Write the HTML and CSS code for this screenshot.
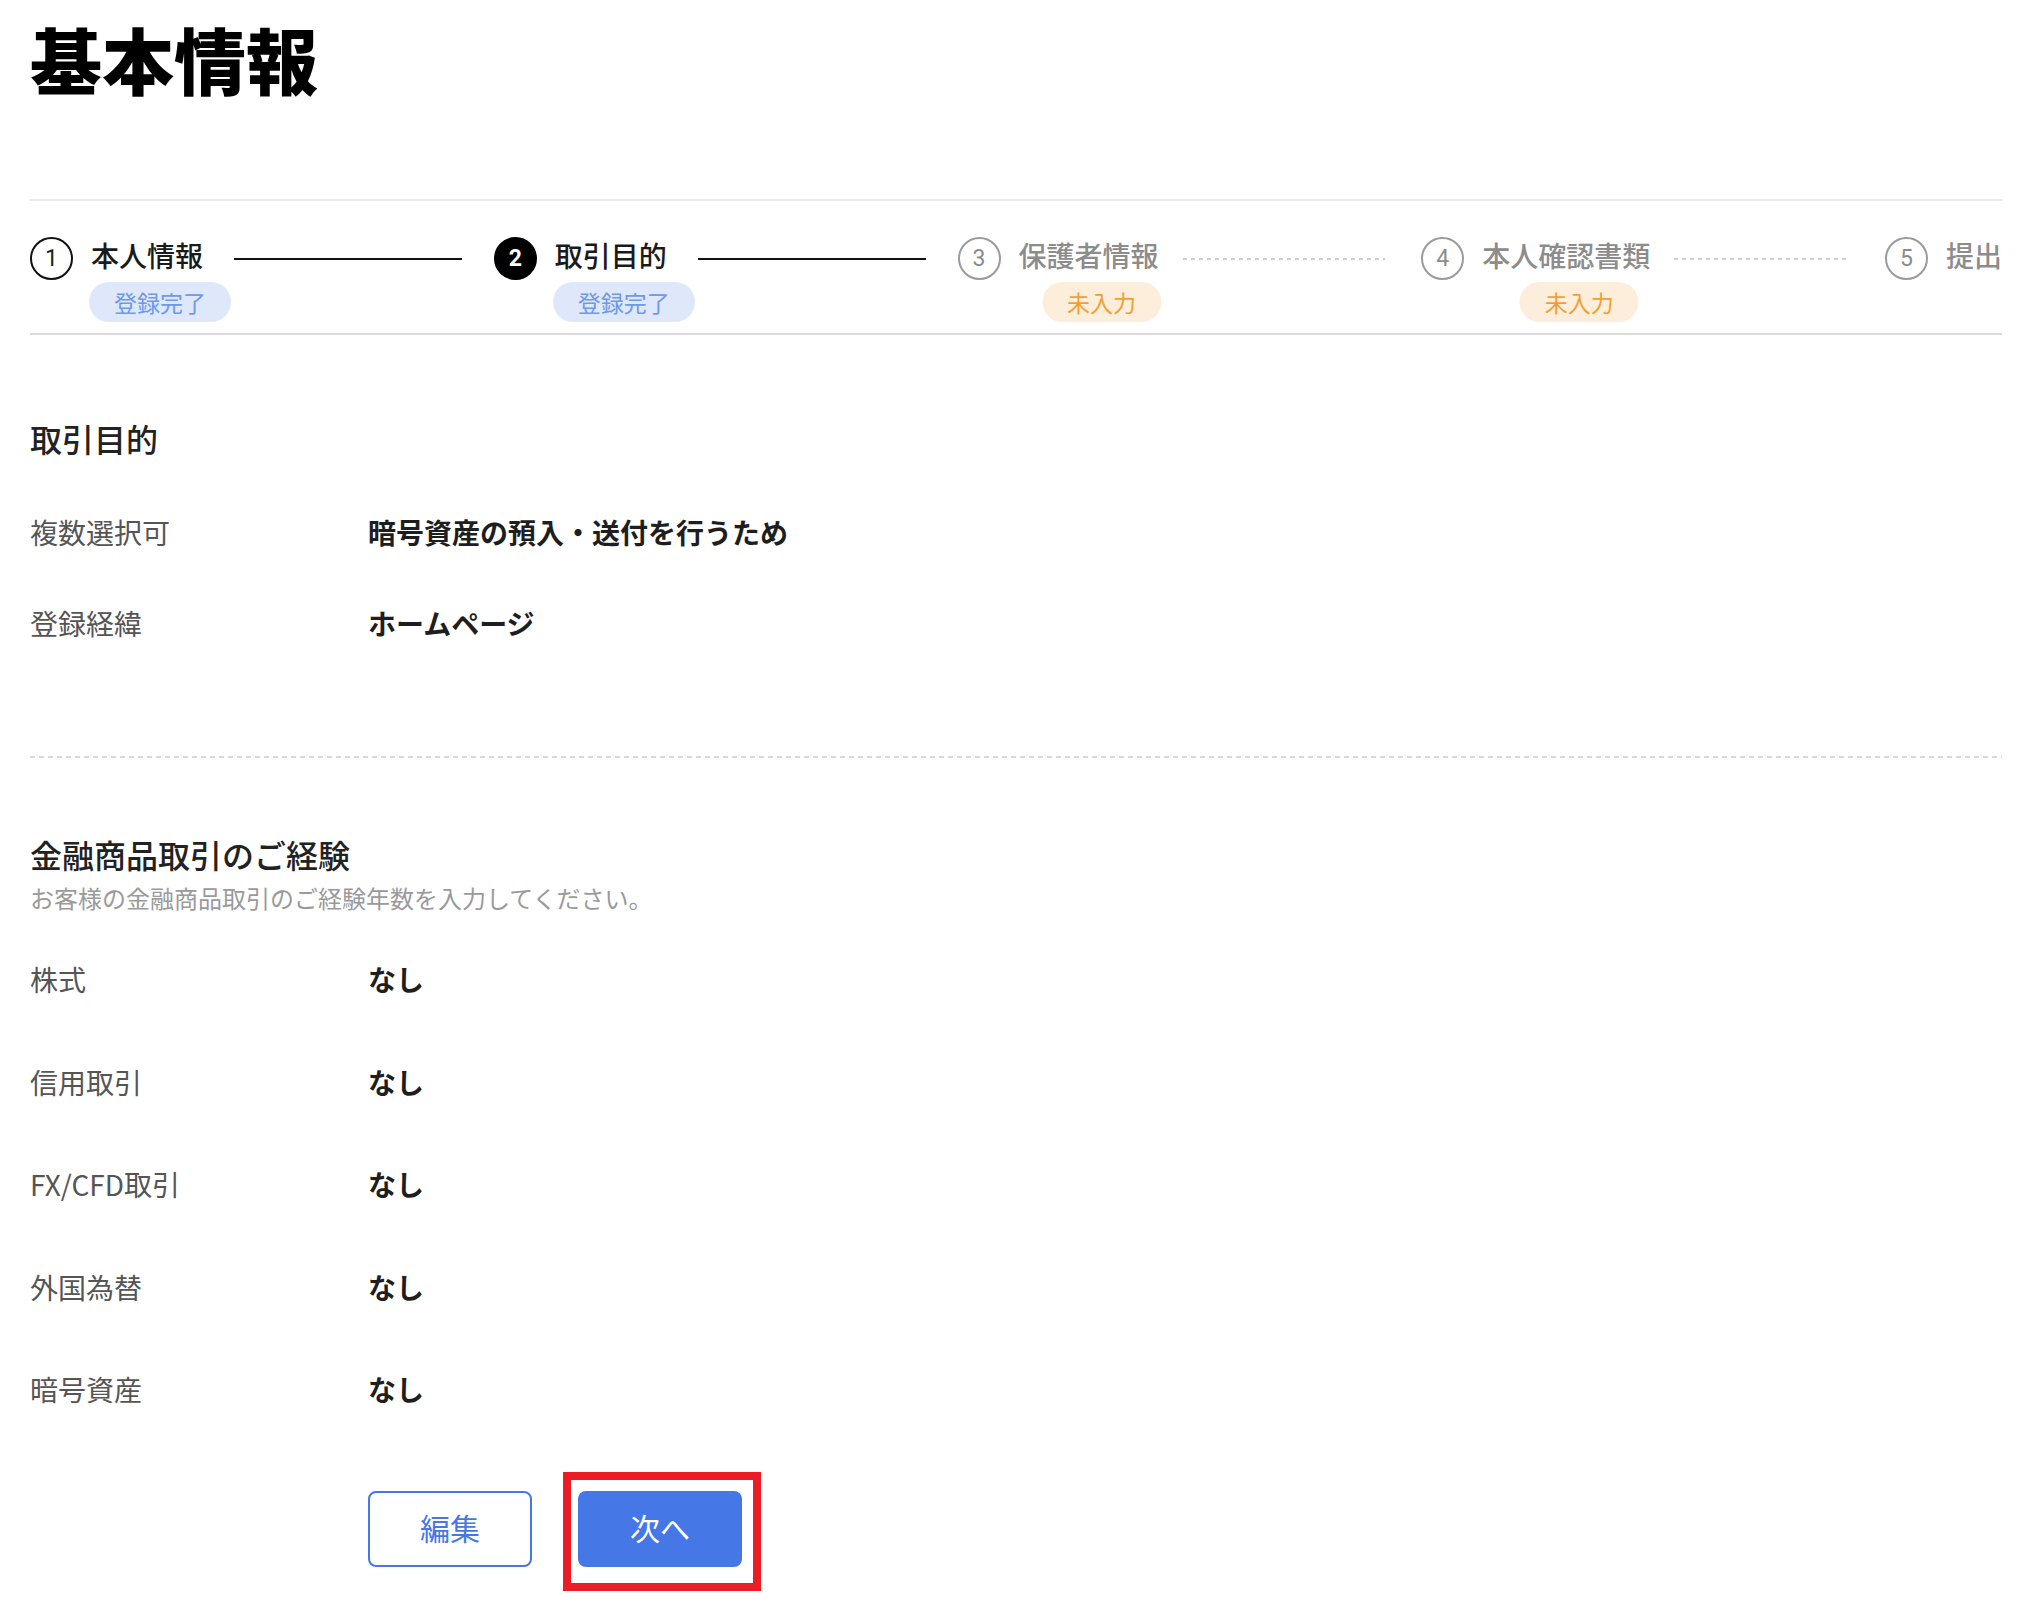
FILE: index.html
```
<!DOCTYPE html>
<html lang="ja">
<head>
<meta charset="utf-8"/>
<meta content="width=device-width, initial-scale=1.0" name="viewport"/>
<title>基本情報</title>
<link rel="stylesheet" href="styles.css">
</head>
<body>
<div class="page">
<h1 class="page-title">基本情報</h1>

<ol class="steps">
<li class="step done">
<span class="step-num">1</span>
<span class="step-label">本人情報<span class="badge badge-done">登録完了</span></span>
<span class="step-line"></span>
</li>
<li class="step current">
<span class="step-num">2</span>
<span class="step-label">取引目的<span class="badge badge-done">登録完了</span></span>
<span class="step-line"></span>
</li>
<li class="step todo">
<span class="step-num">3</span>
<span class="step-label">保護者情報<span class="badge badge-todo">未入力</span></span>
<span class="step-line"></span>
</li>
<li class="step todo">
<span class="step-num">4</span>
<span class="step-label">本人確認書類<span class="badge badge-todo">未入力</span></span>
<span class="step-line"></span>
</li>
<li class="step todo last">
<span class="step-num">5</span>
<span class="step-label">提出</span>
</li>
</ol>

<section class="block block-purpose">
<h2 class="block-title">取引目的</h2>
<div class="rows">
<div class="row"><span class="row-label">複数選択可</span><span class="row-value">暗号資産の預入・送付を行うため</span></div>
<div class="row"><span class="row-label">登録経緯</span><span class="row-value">ホームページ</span></div>
</div>
</section>

<div class="divider"></div>

<section class="block block-exp">
<h2 class="block-title">金融商品取引のご経験</h2>
<p class="block-sub">お客様の金融商品取引のご経験年数を入力してください。</p>
<div class="rows">
<div class="row"><span class="row-label">株式</span><span class="row-value">なし</span></div>
<div class="row"><span class="row-label">信用取引</span><span class="row-value">なし</span></div>
<div class="row"><span class="row-label">FX/CFD取引</span><span class="row-value">なし</span></div>
<div class="row"><span class="row-label">外国為替</span><span class="row-value">なし</span></div>
<div class="row"><span class="row-label">暗号資産</span><span class="row-value">なし</span></div>
</div>
</section>

<div class="actions">
<button class="btn btn-outline" type="button">編集</button>
<div class="highlight">
<button class="btn btn-primary" type="button">次へ</button>
</div>
</div>
</div>
</body>
</html>
```

FILE: styles.css
```
body {
  font-family: "Noto Sans CJK JP", "Noto Sans", sans-serif;
  margin: 0;
  background: #fff;
  color: #222;
}
.page {
  padding: 15px 32px 0 30px;
}
.page-title {
  font-size: 72px;
  line-height: 86px;
  font-weight: 900;
  margin: 0;
  color: #000;
}

/* steps */
.steps {
  list-style: none;
  margin: 98px 0 0;
  padding: 36px 0 53px;
  display: flex;
  border-top: 2px solid #e9e9e9;
  border-bottom: 2px solid #dadada;
}
.step {
  flex: 1;
  display: flex;
  align-items: center;
  height: 43px;
}
.step.last {
  flex: none;
}
.step-num {
  box-sizing: border-box;
  width: 43px;
  height: 43px;
  border-radius: 50%;
  border: 2px solid #111;
  display: flex;
  align-items: center;
  justify-content: center;
  font-family: Roboto, "Noto Sans", sans-serif;
  font-size: 23px;
  flex: none;
}
.step-label {
  position: relative;
  margin-left: 18px;
  padding-bottom: 6px;
  font-size: 28px;
  line-height: 43px;
  font-weight: 500;
  color: #1a1a1a;
  white-space: nowrap;
}
.step-line {
  flex: 1;
  height: 2px;
  margin: 0 32px 0 31px;
  background: #111;
}
.step.current .step-num {
  background: #000;
  border-color: #000;
  color: #fff;
  font-weight: 700;
}
.step.todo .step-num {
  border-color: #9b9b9b;
  color: #8c8c8c;
}
.step.todo .step-label {
  color: #8c8c8c;
}
.step.todo .step-line {
  background: repeating-linear-gradient(to right, #cfcfcf 0 4px, transparent 4px 8px);
  margin: 0 36px 0 24px;
}
.badge {
  position: absolute;
  top: calc(100% - 1px);
  left: 50%;
  transform: translateX(calc(-50% + 13px));
  padding: 0 25px;
  height: 40px;
  line-height: 40px;
  border-radius: 20px;
  font-size: 23px;
  font-weight: 400;
  white-space: nowrap;
}
.badge-done {
  background: #dfe8fb;
  color: #6e98ea;
}
.badge-todo {
  background: #fdeedb;
  color: #f0a032;
}

/* sections */
.block-title {
  margin: 0;
  font-size: 32px;
  line-height: 48px;
  font-weight: 500;
  color: #222;
}
.block-purpose {
  padding-top: 79px;
}
.block-purpose .rows {
  margin-top: 24px;
}
.block-purpose .row {
  height: 91px;
}
.block-exp {
  padding-top: 72px;
}
.block-sub {
  margin: 2px 0 0;
  font-size: 24px;
  line-height: 36px;
  color: #9a9a9a;
}
.block-exp .rows {
  margin-top: 12px;
}
.block-exp .row {
  height: 102.5px;
}
.row {
  display: grid;
  grid-template-columns: 338px 1fr;
  align-items: center;
}
.row-label {
  font-size: 28px;
  color: #555;
}
.row-value {
  font-size: 28px;
  font-weight: 700;
  color: #1e1e1e;
}
.divider {
  margin-top: 88px;
  height: 2px;
  background: repeating-linear-gradient(to right, #d9d9d9 0 5px, transparent 5px 9px);
}

/* buttons */
.actions {
  display: flex;
  align-items: flex-start;
  margin-top: 31px;
  padding-left: 338px;
  padding-bottom: 20px;
}
.btn {
  box-sizing: border-box;
  width: 164px;
  height: 76px;
  border-radius: 8px;
  font-family: inherit;
  font-size: 30px;
  padding: 0 0 3px;
  cursor: pointer;
}
.btn-outline {
  margin-top: 19px;
  margin-right: 31px;
  background: #fff;
  border: 2px solid #4677e6;
  color: #4677e6;
}
.btn-primary {
  background: #4677e6;
  border: none;
  color: #fff;
}
.highlight {
  border: 8px solid #ed1c24;
  padding: 11px 11px 16px 7px;
}
```
